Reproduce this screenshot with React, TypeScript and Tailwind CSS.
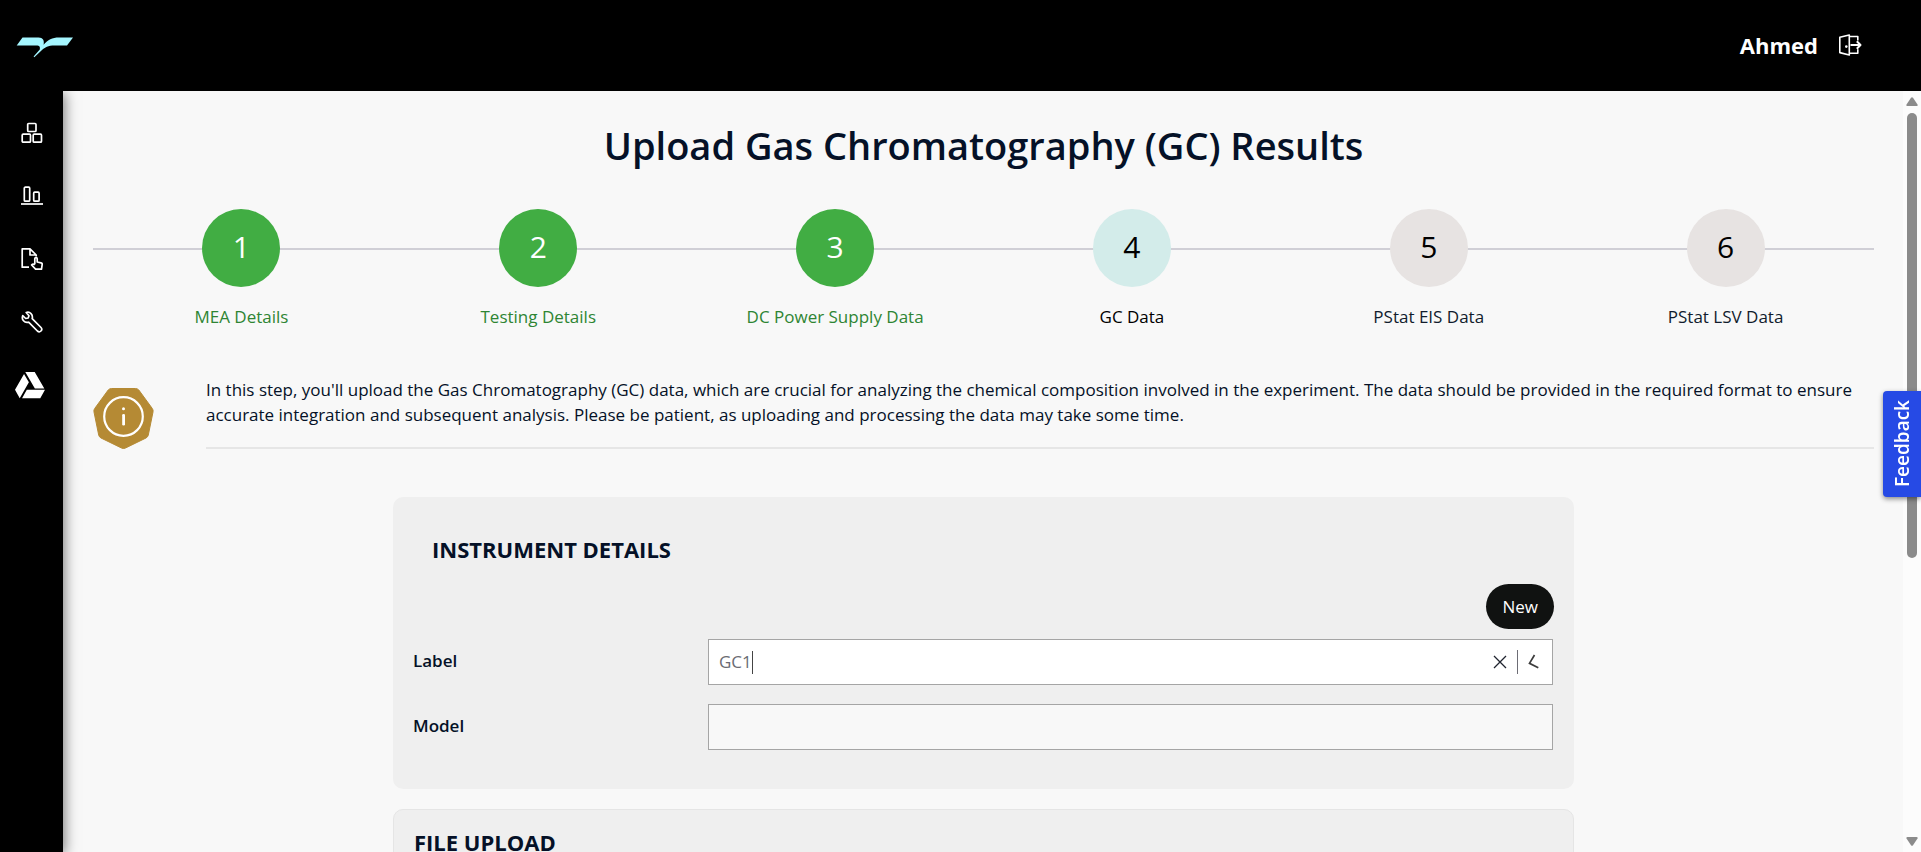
import React, { useState } from "react";
import { FaGoogleDrive } from "react-icons/fa";

type StepState = "done" | "current" | "upcoming";

const steps: { label: string; state: StepState }[] = [
  { label: "MEA Details", state: "done" },
  { label: "Testing Details", state: "done" },
  { label: "DC Power Supply Data", state: "done" },
  { label: "GC Data", state: "current" },
  { label: "PStat EIS Data", state: "upcoming" },
  { label: "PStat LSV Data", state: "upcoming" },
];

const circleStyle: Record<StepState, string> = {
  done: "bg-[#41ad43] text-white",
  current: "bg-[#d3ecea] text-black",
  upcoming: "bg-[#e7e3e2] text-black",
};

const labelStyle: Record<StepState, string> = {
  done: "text-[#2e8533]",
  current: "text-black",
  upcoming: "text-[#111c2d]",
};

function Logo() {
  return (
    <svg width="58" height="22" viewBox="0 0 58 22" fill="#a5f6ff" aria-hidden="true">
      <path d="M6.500 1.500H22.500C27 1.500 28.500 4.500 27.600 8.700C32 3.800 36 1.500 43 1.500H57L51 9.500H38.500C32 9.500 29 11.500 26 14L18.300 21.300L17.600 20.600L23.800 13.600C24.300 10.800 23.500 9.500 20.500 9.500H.7Z" />
    </svg>
  );
}

function BoxesIcon() {
  return (
    <svg width="22" height="22" viewBox="0 0 22 22" fill="none" stroke="white" strokeWidth="1.700" aria-hidden="true">
      <rect x="6.700" y="1.500" width="8.300" height="8" rx="1" />
      <rect x="1.200" y="12.200" width="8.300" height="8" rx="1" />
      <rect x="12.200" y="12.200" width="8.300" height="8" rx="1" />
    </svg>
  );
}

function BarsIcon() {
  return (
    <svg width="22" height="22" viewBox="0 0 22 22" fill="none" stroke="white" strokeWidth="1.700" aria-hidden="true">
      <rect x="3.300" y="2.200" width="5.400" height="14" rx="1" />
      <rect x="12.700" y="7.200" width="5.400" height="9" rx="1" />
      <path d="M0 19H22" />
    </svg>
  );
}

function FileTouchIcon() {
  return (
    <svg width="22" height="22" viewBox="0 0 22 22" fill="none" stroke="white" strokeWidth="1.700" strokeLinejoin="round" aria-hidden="true">
      <path d="M8 19.200H1.200V.9H9L15.200 7V8.500M9 .9V7H15.200" />
      <path d="M13.800 16.200V10.800C13.800 9.300 16.200 9.300 16.200 10.800V14L20 14.800C20.900 15 21.300 15.600 21.200 16.400L20.500 21.200H14.600L10.600 17C11.200 15.800 12.500 15.700 13.800 16.800" />
    </svg>
  );
}

function WrenchIcon() {
  return (
    <svg width="22" height="22" viewBox="0 0 22 22" fill="none" stroke="white" strokeWidth="1.700" strokeLinejoin="round" aria-hidden="true">
      <path d="M5.200 1.500L8 4.700L7.200 7L4.700 7.500L1.700 4.700C.3 8.500 3.300 12.300 7.600 11.200L16.400 20C18.900 22.200 22.200 19 20 16.500L11.200 7.700C12.200 3.500 9 .3 5.200 1.500Z" />
    </svg>
  );
}

function LogoutIcon() {
  return (
    <svg width="24" height="22" viewBox="0 0 24 22" fill="none" stroke="white" strokeWidth="1.600" strokeLinejoin="round" aria-hidden="true">
      <path d="M11.300 1L1.800 3.200V18.600L11.300 21Z" />
      <path d="M11.300 2.500H19.800V6.500M11.300 19.300H19.800V15.200" />
      <path d="M12.500 11H22.500M18.800 7.300L22.500 11L18.800 14.700" strokeWidth="2" />
      <circle cx="8.300" cy="12.600" r="1.300" fill="white" stroke="none" />
    </svg>
  );
}

function InfoBadge() {
  return (
    <svg width="61" height="61" viewBox="0 0 61 61" className="shrink-0" aria-hidden="true">
      <path
        d="M18.500 .5H42.500Q44.500 .5 45.800 2L59.300 20.500Q60.500 22 60 24L55.300 47Q54.900 49 53 50L32.500 60Q30.500 61 28.500 60L8 50Q6.100 49 5.700 47L1 24Q.5 22 1.700 20.500L15.200 2Q16.500 .5 18.500 .5Z"
        fill="#b58a34"
        stroke="#b58a34"
      />
      <circle cx="30.500" cy="28.500" r="19.300" fill="none" stroke="white" strokeWidth="2.200" />
      <rect x="29.200" y="26" width="2.800" height="11.500" rx="1.300" fill="white" />
      <circle cx="30.500" cy="20.800" r="1.500" fill="white" />
    </svg>
  );
}

const navItems = [
  { name: "Cells", icon: <BoxesIcon /> },
  { name: "Charts", icon: <BarsIcon /> },
  { name: "Uploads", icon: <FileTouchIcon /> },
  { name: "Tools", icon: <WrenchIcon /> },
];

export default function App() {
  const [label, setLabel] = useState("GC1");
  const [model, setModel] = useState("");

  return (
    <div className="flex h-screen flex-col overflow-hidden bg-[#f8f8f8] font-['Open_Sans',sans-serif] text-[#051127]">
      <header className="z-20 flex h-[91px] shrink-0 items-center justify-between bg-black pr-[59px] pb-px pl-4 text-white">
        <a href="#home" aria-label="Home" className="pt-1">
          <Logo />
        </a>
        <div className="flex items-center gap-5">
          <span className="text-[22px] leading-8 font-bold">Ahmed</span>
          <button type="button" aria-label="Log out">
            <LogoutIcon />
          </button>
        </div>
      </header>

      <div className="flex min-h-0 flex-1">
        <nav className="z-10 flex w-[63px] shrink-0 flex-col bg-black pt-[10px] shadow-[2px_2px_12px_rgba(0,0,0,0.5)]">
          {navItems.map((item) => (
            <a key={item.name} href={`#${item.name}`} aria-label={item.name} className="flex h-[63px] items-center justify-center">
              {item.icon}
            </a>
          ))}
          <a href="#drive" aria-label="Google Drive" className="flex h-[63px] items-center justify-center pr-1 text-white">
            <FaGoogleDrive size={30} />
          </a>
        </nav>

        <main className="min-w-0 flex-1 overflow-hidden pt-[26px] pr-[29px] pl-[30px]">
          <h1 className="text-center text-[38px] leading-[56px] font-semibold">Upload Gas Chromatography (GC) Results</h1>

          <ol className="relative mt-9 grid grid-cols-6">
            <li aria-hidden="true" className="absolute inset-x-0 top-[39px] h-[2px] bg-[#d0cfd6]" />
            {steps.map((step, i) => (
              <li key={step.label} className="relative flex flex-col items-center gap-4">
                <span className={`flex size-[78px] items-center justify-center rounded-full pb-1 text-[30px] ${circleStyle[step.state]}`}>
                  {i + 1}
                </span>
                <span className={`text-[17px] leading-7 ${labelStyle[step.state]}`}>{step.label}</span>
              </li>
            ))}
          </ol>

          <section className="mt-[46px] flex gap-[52px]">
            <div className="pt-[11px]">
              <InfoBadge />
            </div>
            <p className="flex-1 border-b-2 border-[#e6e6e6] pb-5 text-[17px] leading-[25px]">
              In this step, you'll upload the Gas Chromatography (GC) data, which are crucial for analyzing the chemical
              composition involved in the experiment. The data should be provided in the required format to ensure
              accurate integration and subsequent analysis. Please be patient, as uploading and processing the data may
              take some time.
            </p>
          </section>

          <div className="mx-auto mt-12 flex max-w-[1181px] flex-col gap-5">
            <section className="rounded-[10px] bg-[#efefef] px-5 pt-9 pb-[39px]">
              <h2 className="px-[19px] text-[22px] leading-8 font-bold">INSTRUMENT DETAILS</h2>
              <div className="mt-[19px] flex justify-end">
                <button type="button" className="h-[45px] rounded-full bg-[#101211] px-4 text-[17px] font-medium text-white">
                  New
                </button>
              </div>
              <div className="mt-[10px] flex items-center pr-px">
                <label htmlFor="label" className="w-[295px] pb-[2px] text-[17px] font-semibold">
                  Label
                </label>
                <div className="flex h-[46px] flex-1 items-center border border-[#a5a5a5] bg-white pr-3 pl-[10px]">
                  <input
                    id="label"
                    value={label}
                    onChange={(e) => setLabel(e.target.value)}
                    className="[field-sizing:content] text-[17px] text-[#6a6c73] outline-none"
                  />
                  <span aria-hidden="true" className="h-[23px] w-px bg-[#444]" />
                  <button type="button" aria-label="Clear" className="ml-auto" onClick={() => setLabel("")}>
                    <svg width="14" height="14" viewBox="0 0 14 14" stroke="#20242f" strokeWidth="1.300" aria-hidden="true">
                      <path d="M1 1L13 13M13 1L1 13" />
                    </svg>
                  </button>
                  <span aria-hidden="true" className="mx-[10px] h-6 w-px bg-[#6d6d75]" />
                  <button type="button" aria-label="Show options">
                    <svg width="12" height="16" viewBox="0 0 12 16" fill="none" stroke="#3c3c3c" strokeWidth="1.700" aria-hidden="true">
                      <path d="M6.500 1L1.500 9.300L10.300 13.700" />
                    </svg>
                  </button>
                </div>
              </div>
              <div className="mt-[19px] flex items-center pr-px">
                <label htmlFor="model" className="w-[295px] pb-[2px] text-[17px] font-semibold">
                  Model
                </label>
                <input
                  id="model"
                  value={model}
                  onChange={(e) => setModel(e.target.value)}
                  className="h-[46px] min-w-0 flex-1 border border-[#a5a5a5] bg-[#f8f8f8] px-[10px] text-[17px] outline-none"
                />
              </div>
            </section>

            <section className="rounded-[10px] border border-[#e5e5e5] bg-[#efefef] px-5 pt-4 pb-48">
              <h2 className="text-[22px] leading-8 font-bold">FILE UPLOAD</h2>
            </section>
          </div>
        </main>

        <div aria-hidden="true" className="flex w-[18px] shrink-0 flex-col items-center bg-[#fcfcfc] py-[6px]">
          <svg width="12" height="10" viewBox="0 0 12 10" fill="#8b8b8b">
            <path d="M5 .8Q6 -.2 7 .8L11.500 7.500Q12 9 10.500 9H1.500Q0 9 .5 7.500Z" />
          </svg>
          <div className="my-[6px] w-full flex-1">
            <div className="mx-auto h-[62%] w-[10px] rounded-full bg-[#8b8b8b]" />
          </div>
          <svg width="12" height="10" viewBox="0 0 12 10" fill="#8b8b8b">
            <path d="M5 9.200Q6 10.200 7 9.200L11.500 2.500Q12 1 10.500 1H1.500Q0 1 .5 2.500Z" />
          </svg>
        </div>
      </div>

      <button
        type="button"
        className="fixed top-[391px] right-0 z-30 flex h-[106px] w-[38px] items-center justify-center rounded-l bg-[#264ae5] text-white shadow-[0_2px_5px_rgba(0,0,0,0.45)]"
      >
        <span className="rotate-180 text-[19px] font-semibold [writing-mode:vertical-rl]">Feedback</span>
      </button>
    </div>
  );
}
